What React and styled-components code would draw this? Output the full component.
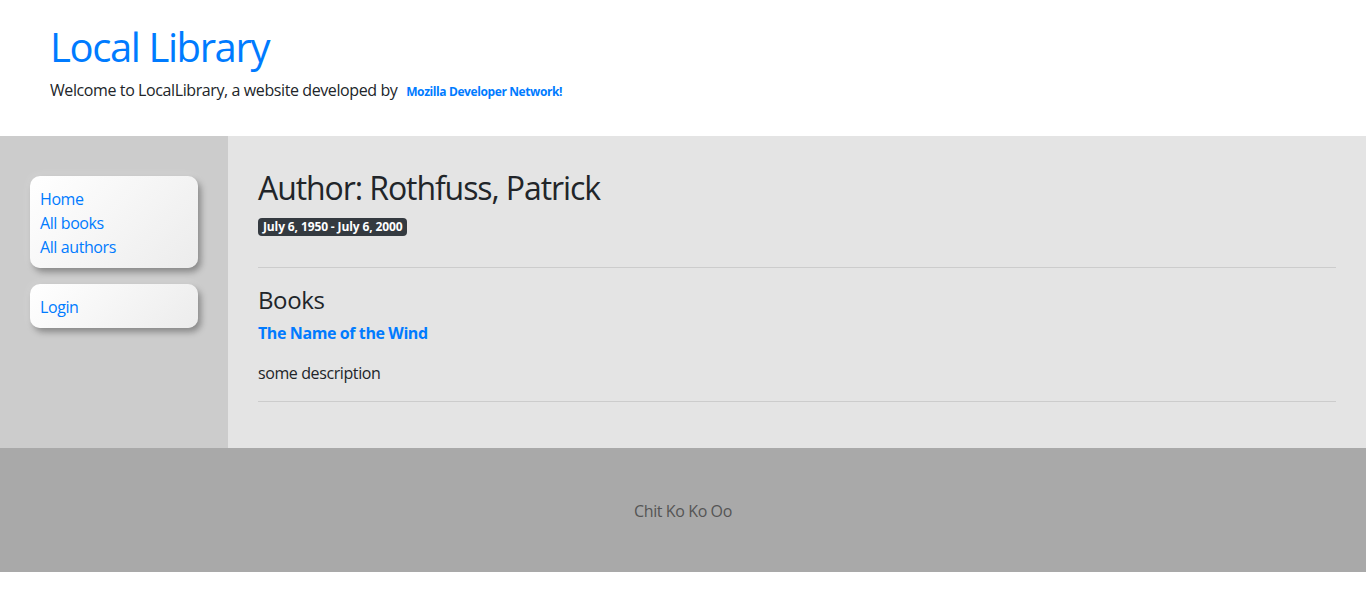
import React from "react";
import styled, { createGlobalStyle } from "styled-components";

const Global = createGlobalStyle`
  html, body { margin: 0; padding: 0; background: #fff; }
  body {
    font-family: "Open Sans", "Noto Sans", Arial, sans-serif;
    font-size: 16px;
    line-height: 1.5;
    letter-spacing: -0.025em;
    color: #212529;
  }
  * { box-sizing: border-box; }
`;

const Header = styled.header`
  height: 136px;
  padding: 23px 50px 0;
`;

const SiteTitle = styled.h1`
  margin: 0 0 7px;
  font-size: 40px;
  font-weight: 400;
  line-height: 1.2;
  letter-spacing: -0.035em;
  color: #007bff;
`;

const Tagline = styled.p`
  margin: 0;
  font-size: 16px;
`;

const TagLink = styled.a`
  margin-left: 5px;
  font-size: 12px;
  font-weight: 700;
  color: #007bff;
  text-decoration: none;
`;

const Middle = styled.div`
  display: grid;
  grid-template-columns: 228px 1fr;
`;

const Sidebar = styled.aside`
  background: #cccccc;
  padding: 40px 30px;
  display: flex;
  flex-direction: column;
  gap: 16px;
`;

const NavCard = styled.ul`
  list-style: none;
  margin: 0;
  padding: 11px 10px 9px;
  border-radius: 10px;
  background: linear-gradient(135deg, #ffffff 0%, #ececec 100%);
  box-shadow: 3px 4px 6px rgba(0, 0, 0, 0.35), 0 0 10px rgba(255, 255, 255, 0.25);
`;

const NavLink = styled.a`
  color: #007bff;
  text-decoration: none;
`;

const Main = styled.main`
  background: #e4e4e4;
  padding: 33px 30px 30px;
`;

const Heading = styled.h2`
  margin: 0 0 6px;
  font-size: 32px;
  font-weight: 400;
  line-height: 1.2;
  letter-spacing: -0.034em;
`;

const Badge = styled.span`
  display: inline-block;
  padding: 3px 5px;
  font-size: 12px;
  font-weight: 700;
  line-height: 1;
  letter-spacing: -0.01em;
  color: #fff;
  background: #343a40;
  border-radius: 4px;
  vertical-align: baseline;
`;

const Dates = styled.p`
  margin: 0 0 30px;
`;

const Rule = styled.hr`
  margin: 0 0 ${(p) => p.$after}px;
  border: 0;
  border-top: 1px solid rgba(0, 0, 0, 0.1);
`;

const SubHeading = styled.h4`
  margin: 0 0 6px;
  font-size: 24px;
  font-weight: 400;
  line-height: 1.2;
`;

const BookLink = styled.a`
  display: block;
  margin-bottom: 16px;
  font-weight: 700;
  color: #007bff;
  text-decoration: none;
`;

const Summary = styled.p`
  margin: 0 0 16px;
`;

const Footer = styled.footer`
  height: 124px;
  padding-top: 2px;
  background: #a9a9a9;
  color: #555;
  display: flex;
  align-items: center;
  justify-content: center;
`;

export default function App() {
  return (
    <>
      <Global />
      <Header>
        <SiteTitle>Local Library</SiteTitle>
        <Tagline>
          Welcome to LocalLibrary, a website developed by{" "}
          <TagLink href="#">Mozilla Developer Network!</TagLink>
        </Tagline>
      </Header>
      <Middle>
        <Sidebar>
          <NavCard>
            <li><NavLink href="#">Home</NavLink></li>
            <li><NavLink href="#">All books</NavLink></li>
            <li><NavLink href="#">All authors</NavLink></li>
          </NavCard>
          <NavCard>
            <li><NavLink href="#">Login</NavLink></li>
          </NavCard>
        </Sidebar>
        <Main>
          <Heading>Author: Rothfuss, Patrick</Heading>
          <Dates><Badge>July 6, 1950 - July 6, 2000</Badge></Dates>
          <Rule $after={18} />
          <SubHeading>Books</SubHeading>
          <BookLink href="#">The Name of the Wind</BookLink>
          <Summary>some description</Summary>
          <Rule $after={16} />
        </Main>
      </Middle>
      <Footer>Chit Ko Ko Oo</Footer>
    </>
  );
}
